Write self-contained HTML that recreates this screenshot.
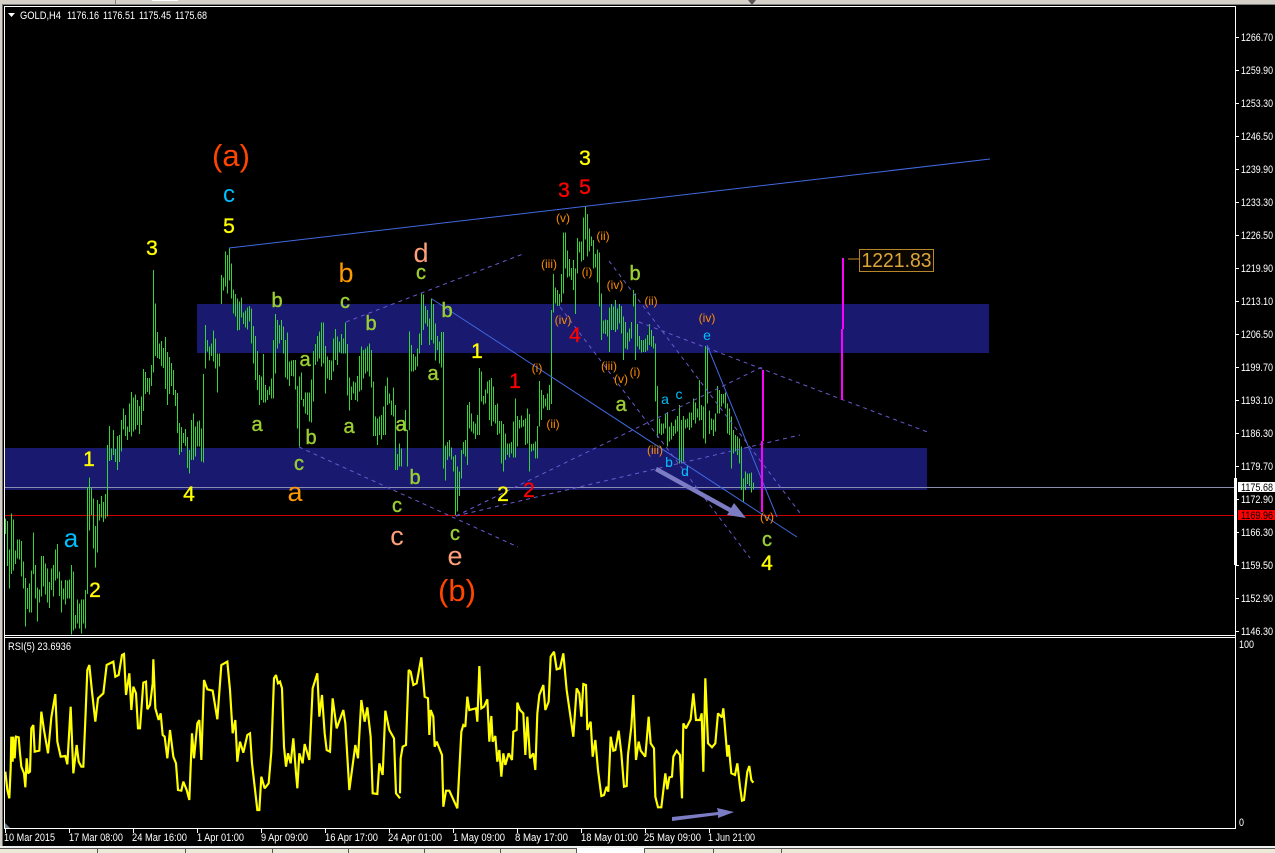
<!DOCTYPE html>
<html><head><meta charset="utf-8"><title>GOLD,H4</title>
<style>
html,body{margin:0;padding:0;width:1275px;height:853px;overflow:hidden;background:#000}
svg{display:block;font-family:"Liberation Sans",Arial,sans-serif}
.t{fill:#fff;font-size:11px}
.y{fill:#ffff00;stroke:#ffff00;stroke-width:.35px;font-size:21px;text-anchor:middle}
.r{fill:#ff0000;stroke:#ff0000;stroke-width:.35px;font-size:21px;text-anchor:middle}
.g{fill:#9acd32;stroke:#9acd32;stroke-width:.4px;font-size:20px;text-anchor:middle}
.bl{fill:#00bfff;font-size:14px;text-anchor:middle}
.o{fill:#ff8c00;font-size:12px;text-anchor:middle}
</style></head><body>
<svg width="1275" height="853" viewBox="0 0 1275 853" xmlns="http://www.w3.org/2000/svg">
<rect width="1275" height="853" fill="#000"/>
<!-- window chrome -->
<rect x="0" y="0" width="1275" height="4" fill="#d4d0c8"/>
<rect x="0" y="4" width="1275" height="1" fill="#808080"/>
<rect x="152" y="0" width="26" height="1" fill="#fff"/>
<rect x="115" y="0" width="1" height="4" fill="#808080"/>
<path d="M748 0h8l-4 5z" fill="#555"/>
<rect x="0" y="0" width="2" height="853" fill="#d4d0c8"/>
<rect x="2" y="4" width="1" height="844" fill="#707070"/>
<!-- zones -->
<rect x="197" y="304" width="792" height="49" fill="#191970"/>
<rect x="5" y="448" width="922" height="42" fill="#191970"/>
<!-- horizontal lines -->
<rect x="5" y="487" width="1230" height="1" fill="#8a8fb0"/>
<rect x="5" y="515" width="1230" height="1" fill="#d00000"/>
<!-- price bars -->
<g fill="none" stroke="#33d633" stroke-width="3" shape-rendering="crispEdges">
<path transform="translate(0 460) scale(.33333)" d="M16 175V222M22 183V318M28 268V386M34 160V342M40 178V332M46 272V312M52 238V295M58 238V298M64 243V350M70 304V386M76 354V500M82 384V447M88 370V458M94 332V458M100 217V342M106 315V415M112 382V485M118 388V428M124 288V410M130 288V380M136 310V404M142 325V428M148 366V444M154 325V390M160 315V410M166 268V362M172 252V356M178 334V408M184 362V458M190 385V418M196 360V434M202 362V416M208 358V416M214 315V524M220 334V512M226 465V506M232 418V490M238 430V506M244 418V520M250 418V490M256 390V506M262 83V402M268 52V212M274 83V165M280 115V265M286 198V323M292 120V278M298 132V182M304 108V172M310 126V186M316 102V176M322 -45V170"/>
<path transform="translate(100 260) scale(.33333)" d="M28 498V603M34 565V600M40 510V585M46 567V606M52 528V630M58 525V606M64 480V575M70 445V508M76 465V528M82 500V540M88 430V516M94 396V530M100 412V514M106 403V508M112 420V495M118 438V522M124 410V495M130 327V453M136 336V402M142 354V396M148 354V404M154 315V378M160 30V338M166 130V288M172 216V294M178 250V297M184 243V318M190 264V324M196 231V387M202 276V435M208 291V402M214 309V378M220 330V405M226 390V438M232 399V519M238 489V585M244 501V576M250 519V549M256 507V558M262 531V624M268 570V640"/>
<path transform="translate(180 230) scale(.33333)" d="M34 570V690M40 550V690M46 590V680M52 575V650M58 572V650M64 595V695M70 432V698M76 285V415M82 330V365M88 350V392M94 340V378M100 302V395M106 325V415M112 370V488M118 370V410M124 135V222M130 142V182M136 64V170M142 75V190M148 55V152M154 100V205M160 178V250M166 192V260M172 205V302M178 215V300M184 202V262M190 248V282M196 242V292M202 232V298M208 228V275M214 235V340M220 288V400M226 318V450M232 363V480M238 435V525M244 440V510M250 372V518M256 465V518M262 480V510M268 470V495M274 445V505M280 330V505M286 252V430M292 270V355M298 285V340M304 270V330M310 290V370M316 330V442M322 308V448M328 395V468M334 392V438M340 390V440M346 390V478M352 468V595M358 440V650M364 428V510M370 507V530M376 487V550M382 487V555M388 488V575M394 448V578M400 363V515M406 342V405M412 318V395M418 305V385M424 278V410M430 278V400M436 348V490M442 380V445M448 390V450M454 392V450M460 325V425M466 297V390M472 320V405M478 335V368M484 312V370M490 325V370M496 277V370M502 342V497M508 442V542M514 470V510M520 455V490M526 458V510M532 438V515M538 378V485M544 350V480M550 360V445M556 355V430M562 350V425M568 340V440M574 360V472M580 455V618M586 560V618M592 565V645M598 560V615M604 555V628M610 530V615M616 468V615M622 442V525M628 490V520M634 512V555M640 472V560M646 525V720M652 672V720M658 640V710M664 655V710M670 570V600M676 540V600M682 600V710M688 305V600M694 345V425M700 372V425M706 380V420M712 355V410M718 310V370M724 190V345M730 193V300M736 228V280M742 240V290M748 265V345M754 205V330M760 222V340M766 280V392M772 318V360M778 335V400M784 306V412"/>
<path transform="translate(440 340) scale(.33333)" d="M10 -24V385M16 316V422M22 306V360M28 300V350M34 322V358M40 350V395M46 345V525M52 380V515M58 395V468M64 330V415M70 306V342M76 300V350M82 195V375M88 186V265M94 220V275M100 245V280M106 250V297M112 225V285M118 84V285M124 94V185M130 168V193M136 148V190M142 125V160M148 120V240M154 114V258M160 140V245M166 195V250M172 190V285M178 243V280M184 243V370M190 252V395M196 280V360M202 310V345M208 310V352M214 306V340M220 245V352M226 175V353M232 228V320M238 240V265M244 226V262M250 240V260M256 235V315M262 205V310M268 222V395M274 312V335M280 310V332M286 305V355M292 258V355M298 123V260M304 150V240M310 165V205M316 175V200M322 160V210M328 135V210M334 -90V192"/>
<path transform="translate(500 200) scale(.33333)" d="M160 222V338M166 262V310M172 270V318M178 282V318M184 222V308M190 98V280M196 98V205M202 152V232M208 177V230M214 204V240M220 180V270M226 205V342M232 114V220M238 124V157M244 124V185M250 52V180M256 20V118M262 42V170M268 86V155M274 110V138M280 120V205M286 162V202M292 148V248M298 158V320M304 280V420M310 362V400M316 358V402M322 360V410M328 322V456M334 312V390M340 320V390M346 300V396M352 326V388M358 312V370M364 318V400M370 350V480M376 366V445M382 398V448M388 385V425M394 366V415M400 270V320M406 280V480M412 372V440M418 408V448M424 420V458M430 420V456M436 415V456M442 405V452M448 372V435M454 390V440M460 408V445M466 430V600"/>
<path transform="translate(620 380) scale(.33333)" d="M106 0V65M112 18V172M118 115V160M124 130V165M130 130V160M136 100V145M142 96V200M148 140V185M154 128V178M160 138V168M166 118V160M172 108V155M178 75V250M184 120V250M190 108V245M196 118V145M202 115V142M208 98V150M214 98V142M220 55V120M226 68V130M232 85V112M238 0V122M244 75V120M250 80V175M256 -102V190M262 -102V70M268 92V162M274 115V150M280 118V168M286 100V155M292 18V100M298 30V100M304 42V80M310 42V70M316 38V85M322 70V160M328 85V165M334 110V265M340 150V220M346 165V215M352 170V225M358 175V250M364 200V330M370 295V365M376 275V330M382 280V312M388 280V318M394 278V338M400 308V328"/>
</g>
<!-- trend lines -->
<g fill="none" stroke="#4169e1" stroke-width="1">
<path d="M229 248L990 159"/>
<path d="M432 299L797 537"/>
<path d="M707 345L777 517"/>
</g>
<g fill="none" stroke="#6a5acd" stroke-width="1" stroke-dasharray="4 4">
<path d="M346 322L523 254"/>
<path d="M299 447L518 547"/>
<path d="M456 516L762 367"/>
<path d="M456 516L800 435"/>
<path d="M609 261L800 513"/>
<path d="M560 307L750 558"/>
<path d="M639 322L930 433"/>
</g>
<!-- magenta lines -->
<g stroke="#ff00ff" stroke-width="2" fill="none" shape-rendering="crispEdges">
<path d="M763 370V441M762 441V512"/>
<path d="M843 258V329M842 329V400"/>
</g>
<!-- arrows -->
<g fill="#7c7cc4" stroke="none">
<path d="M655 471L657 467L731 508L734 503L746 518L727 515L729 512Z"/>
<path d="M672 817L718 812L717 808L734 812L718 818L718 815L672 821Z"/>
</g>
<!-- price label box -->
<path d="M848 259H859" stroke="#c08a2a" stroke-width="1"/>
<rect x="859.5" y="249.5" width="74" height="22" fill="#0c0800" stroke="#b8862a"/>
<text x="896.5" y="267" font-size="20" fill="#dca63c" text-anchor="middle" textLength="70" lengthAdjust="spacingAndGlyphs">1221.83</text>
<!-- wave labels large -->
<text x="231" y="166" font-size="31" fill="#ff4500" text-anchor="middle">(a)</text>
<text x="457" y="601" font-size="31" fill="#ff4500" text-anchor="middle">(b)</text>
<text x="229" y="202" font-size="24" fill="#00bfff" text-anchor="middle">c</text>
<text x="71" y="547" font-size="26" fill="#00bfff" text-anchor="middle">a</text>
<text x="346" y="282" font-size="27" fill="#ff9900" text-anchor="middle">b</text>
<text x="295" y="501" font-size="27" fill="#ff9900" text-anchor="middle">a</text>
<text x="421" y="262" font-size="27" fill="#ffa07a" text-anchor="middle">d</text>
<text x="397" y="545" font-size="27" fill="#ffa07a" text-anchor="middle">c</text>
<text x="455" y="565" font-size="27" fill="#ffa07a" text-anchor="middle">e</text>
<!-- yellow digits -->
<text class="y" x="229" y="233">5</text>
<text class="y" x="152" y="255">3</text>
<text class="y" x="89" y="466">1</text>
<text class="y" x="95" y="597">2</text>
<text class="y" x="189" y="501">4</text>
<text class="y" x="477" y="358">1</text>
<text class="y" x="503" y="501">2</text>
<text class="y" x="585" y="165">3</text>
<text class="y" x="767" y="570">4</text>
<!-- red digits -->
<text class="r" x="515" y="388">1</text>
<text class="r" x="529" y="497">2</text>
<text class="r" x="564" y="197">3</text>
<text class="r" x="585" y="194">5</text>
<text class="r" x="575" y="342">4</text>
<!-- green letters -->
<text class="g" x="277" y="307">b</text>
<text class="g" x="345" y="308">c</text>
<text class="g" x="371" y="330">b</text>
<text class="g" x="421" y="279">c</text>
<text class="g" x="447" y="317">b</text>
<text class="g" x="305" y="366">a</text>
<text class="g" x="257" y="431">a</text>
<text class="g" x="349" y="433">a</text>
<text class="g" x="401" y="431">a</text>
<text class="g" x="433" y="380">a</text>
<text class="g" x="311" y="444">b</text>
<text class="g" x="299" y="470">c</text>
<text class="g" x="397" y="512">c</text>
<text class="g" x="415" y="484">b</text>
<text class="g" x="455" y="540">c</text>
<text class="g" x="621" y="411">a</text>
<text class="g" x="635" y="280">b</text>
<text class="g" x="767" y="546">c</text>
<!-- small cyan letters -->
<text class="bl" x="707" y="340">e</text>
<text class="bl" x="665" y="404">a</text>
<text class="bl" x="679" y="399">c</text>
<text class="bl" x="669" y="467">b</text>
<text class="bl" x="685" y="476">d</text>
<!-- roman labels -->
<text class="o" x="563" y="222">(v)</text>
<text class="o" x="603" y="240">(ii)</text>
<text class="o" x="549" y="268">(iii)</text>
<text class="o" x="587" y="276">(i)</text>
<text class="o" x="615" y="289">(iv)</text>
<text class="o" x="651" y="305">(ii)</text>
<text class="o" x="707" y="322">(iv)</text>
<text class="o" x="563" y="324">(iv)</text>
<text class="o" x="537" y="372">(i)</text>
<text class="o" x="609" y="370">(iii)</text>
<text class="o" x="621" y="383">(v)</text>
<text class="o" x="635" y="376">(i)</text>
<text class="o" x="553" y="428">(ii)</text>
<text class="o" x="655" y="454">(iii)</text>
<text class="o" x="767" y="521">(v)</text>
<!-- RSI -->
<g fill="none" stroke="#ffff00" stroke-width="6.5" stroke-linejoin="miter" stroke-miterlimit="2">
<polyline transform="translate(0 630) scale(.33333)" points="16,425 22,480 28,505 32,415 34,320 38,395 40,320 44,385 48,320 56,322 60,370 64,410 72,430 76,472 80,385 84,430 90,425 94,295 100,285 104,365 118,362 124,245 132,300 144,370 154,262 166,192 172,335 182,380 196,378 202,403 212,230 220,430 230,345 236,395 244,410 250,410 256,270 262,120 268,105 276,185 286,275 294,205 310,190 320,105 340,95 346,140 356,135 366,75 372,72 378,195 388,130 394,240 400,170 408,190 414,295 420,295 430,158 438,155 442,238 450,225 458,160 460,88 466,235 476,270 482,250 488,315 494,320 502,385 510,300 520,380 528,400 534,480 544,482 550,455 560,480 568,510 576,310 582,385 592,280 598,270 604,390 612,150 622,178 638,182 652,268 664,105 682,95 690,180 698,310 706,270 712,395 720,335 730,368 742,315 750,310 756,400 772,540 778,540 784,440 794,475 806,460 814,365 822,145 828,135 834,160 840,155 846,175 852,350 858,410 864,370 872,400 880,325 888,430 892,475 898,370 908,400 914,342 928,390 938,175 952,130 958,260 966,195 974,310 980,360 990,365 998,205 1010,295 1030,240 1036,280 1048,480 1056,420 1066,345 1074,385 1084,210 1094,275 1102,232 1112,320 1118,490 1132,492 1138,400 1148,435 1156,242 1168,300 1182,325 1188,490 1200,505"/>
<polyline transform="translate(400 630) scale(.33333)" points="0,490 2,385 8,350 18,345 26,120 32,125 40,165 50,160 64,82 74,200 84,205 88,315 92,240 100,260 104,350 110,335 126,375 130,530 138,482 148,482 172,535 184,305 190,285 196,290 202,200 208,240 228,235 232,275 238,108 244,235 252,230 262,208 268,335 274,258 278,335 286,318 292,395 298,360 304,440 310,370 316,405 326,370 336,390 340,305 350,300 352,218 360,240 370,250 376,375 382,260 390,385 400,370 406,420 412,250 418,195 430,165 436,240 446,215 452,80 462,65 470,118 480,115 490,70 500,180 510,250 520,320 530,175 538,190 544,260 550,162 558,165 562,300 572,275 578,380 586,330 594,420 604,498 612,495 620,470 625,485 632,320 640,362 646,360 656,302 664,370 672,470 680,468 684,375 694,290 700,195 704,290 708,390 716,335 722,362 736,380 746,260 752,340 762,355 766,500 774,532 784,532 796,430 802,478 808,442 816,440 820,380 830,362 840,375 846,505 850,280 858,295 872,268 880,190 888,270 900,270 905,250 910,425 916,145 924,340 936,352 946,340 954,250 966,262 970,235 978,330 982,380 986,345 994,430 1005,435 1012,400 1020,470 1026,512 1032,510 1042,425 1048,408 1054,450 1060,458"/>
</g>
<path d="M4 822L10 828H4Z" fill="#708090"/>
<!-- frames -->
<g fill="#fff" shape-rendering="crispEdges">
<rect x="4" y="6" width="1232" height="1"/>
<rect x="4" y="6" width="1" height="823"/>
<rect x="1235" y="6" width="1" height="823"/>
<rect x="4" y="635" width="1232" height="1"/>
<rect x="4" y="637" width="1232" height="1"/>
<rect x="4" y="828" width="1232" height="1"/>
<rect x="1234" y="478" width="3" height="87"/>
</g>
<!-- axis ticks -->
<path stroke="#fff" stroke-width="1" fill="none" shape-rendering="crispEdges" d="M1236 37.5h3M1236 70.5h3M1236 103.5h3M1236 136.5h3M1236 169.5h3M1236 202.5h3M1236 235.5h3M1236 268.5h3M1236 301.5h3M1236 334.5h3M1236 367.5h3M1236 400.5h3M1236 433.5h3M1236 466.5h3M1236 499.5h3M1236 532.5h3M1236 565.5h3M1236 598.5h3M1236 631.5h3M5.5 829v4M69.5 829v4M133.5 829v4M197.5 829v4M261.5 829v4M325.5 829v4M389.5 829v4M453.5 829v4M517.5 829v4M581.5 829v4M645.5 829v4M709.5 829v4"/>
<!-- header -->
<path d="M8 13h7l-3.5 4z" fill="#fff"/>
<text class="t" x="20" y="19" textLength="41" lengthAdjust="spacingAndGlyphs">GOLD,H4</text>
<text class="t" x="67" y="19" textLength="32" lengthAdjust="spacingAndGlyphs">1176.16</text>
<text class="t" x="103" y="19" textLength="32" lengthAdjust="spacingAndGlyphs">1176.51</text>
<text class="t" x="139" y="19" textLength="32" lengthAdjust="spacingAndGlyphs">1175.45</text>
<text class="t" x="175" y="19" textLength="32" lengthAdjust="spacingAndGlyphs">1175.68</text>
<text class="t" x="8" y="650" textLength="63" lengthAdjust="spacingAndGlyphs">RSI(5) 23.6936</text>
<!-- price axis -->
<g class="t" fill="#fff" font-size="11">
<text x="1241" y="41" textLength="32" lengthAdjust="spacingAndGlyphs">1266.70</text>
<text x="1241" y="74" textLength="32" lengthAdjust="spacingAndGlyphs">1259.90</text>
<text x="1241" y="107" textLength="32" lengthAdjust="spacingAndGlyphs">1253.30</text>
<text x="1241" y="140" textLength="32" lengthAdjust="spacingAndGlyphs">1246.50</text>
<text x="1241" y="173" textLength="32" lengthAdjust="spacingAndGlyphs">1239.90</text>
<text x="1241" y="206" textLength="32" lengthAdjust="spacingAndGlyphs">1233.30</text>
<text x="1241" y="239" textLength="32" lengthAdjust="spacingAndGlyphs">1226.50</text>
<text x="1241" y="272" textLength="32" lengthAdjust="spacingAndGlyphs">1219.90</text>
<text x="1241" y="305" textLength="32" lengthAdjust="spacingAndGlyphs">1213.10</text>
<text x="1241" y="338" textLength="32" lengthAdjust="spacingAndGlyphs">1206.50</text>
<text x="1241" y="371" textLength="32" lengthAdjust="spacingAndGlyphs">1199.70</text>
<text x="1241" y="404" textLength="32" lengthAdjust="spacingAndGlyphs">1193.10</text>
<text x="1241" y="437" textLength="32" lengthAdjust="spacingAndGlyphs">1186.30</text>
<text x="1241" y="470" textLength="32" lengthAdjust="spacingAndGlyphs">1179.70</text>
<text x="1241" y="503" textLength="32" lengthAdjust="spacingAndGlyphs">1172.90</text>
<text x="1241" y="536" textLength="32" lengthAdjust="spacingAndGlyphs">1166.30</text>
<text x="1241" y="569" textLength="32" lengthAdjust="spacingAndGlyphs">1159.50</text>
<text x="1241" y="602" textLength="32" lengthAdjust="spacingAndGlyphs">1152.90</text>
<text x="1241" y="635" textLength="32" lengthAdjust="spacingAndGlyphs">1146.30</text>
<text x="1239" y="648" textLength="15" lengthAdjust="spacingAndGlyphs">100</text>
<text x="1239" y="826" textLength="5" lengthAdjust="spacingAndGlyphs">0</text>
</g>
<rect x="1238" y="482" width="37" height="10" fill="#fff"/>
<text x="1241" y="491" font-size="11" fill="#000" textLength="32" lengthAdjust="spacingAndGlyphs">1175.68</text>
<rect x="1238" y="510" width="37" height="10" fill="#ff0000"/>
<text x="1241" y="519" font-size="11" fill="#000" textLength="32" lengthAdjust="spacingAndGlyphs">1169.96</text>
<!-- time axis -->
<g fill="#fff" font-size="11">
<text x="4" y="841" textLength="51" lengthAdjust="spacingAndGlyphs">10 Mar 2015</text>
<text x="69" y="841" textLength="54" lengthAdjust="spacingAndGlyphs">17 Mar 08:00</text>
<text x="132" y="841" textLength="55" lengthAdjust="spacingAndGlyphs">24 Mar 16:00</text>
<text x="197" y="841" textLength="47" lengthAdjust="spacingAndGlyphs">1 Apr 01:00</text>
<text x="261" y="841" textLength="47" lengthAdjust="spacingAndGlyphs">9 Apr 09:00</text>
<text x="325" y="841" textLength="53" lengthAdjust="spacingAndGlyphs">16 Apr 17:00</text>
<text x="388" y="841" textLength="54" lengthAdjust="spacingAndGlyphs">24 Apr 01:00</text>
<text x="453" y="841" textLength="52" lengthAdjust="spacingAndGlyphs">1 May 09:00</text>
<text x="515" y="841" textLength="53" lengthAdjust="spacingAndGlyphs">8 May 17:00</text>
<text x="581" y="841" textLength="57" lengthAdjust="spacingAndGlyphs">18 May 01:00</text>
<text x="644" y="841" textLength="57" lengthAdjust="spacingAndGlyphs">25 May 09:00</text>
<text x="708" y="841" textLength="47" lengthAdjust="spacingAndGlyphs">1 Jun 21:00</text>
</g>
<!-- bottom tabs -->
<rect x="0" y="846" width="1275" height="2" fill="#f0f0f0"/>
<rect x="0" y="848" width="1275" height="5" fill="#ece9d8"/>
<rect x="576" y="848" width="68" height="5" fill="#fff"/>
<path stroke="#555" stroke-width="1" fill="none" shape-rendering="crispEdges" d="M576.5 848v5M644.5 848v5M97.5 848v5M185.5 848v5M272.5 848v5M348.5 848v5M424.5 848v5M500.5 848v5M713.5 848v5M781.5 848v5M0 848.5H576M644 848.5H1275"/>
</svg>
</body></html>
